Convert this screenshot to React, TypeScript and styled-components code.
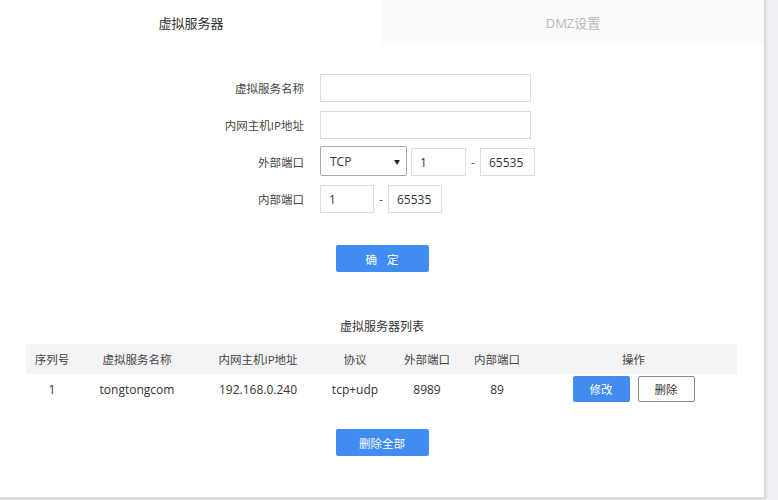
import React from 'react';
import styled, { createGlobalStyle } from 'styled-components';

const GlobalStyle = createGlobalStyle`
  html, body {
    margin: 0;
    padding: 0;
    background: #eff0f4;
    font-family: "Open Sans", "Noto Sans CJK SC", sans-serif;
    color: #333;
  }
`;

const Page = styled.div`
  width: 778px;
  height: 500px;
  overflow: hidden;
`;

const Panel = styled.div`
  width: 764px;
  height: 497px;
  background: #fff;
  border-bottom: 3px solid #dedede;
  box-shadow: 2px 0 3px rgba(0, 0, 0, 0.12);
  display: flex;
  flex-direction: column;
`;

const Tabs = styled.div`
  display: flex;
  height: 44px;
`;

const Tab = styled.div<{ active?: boolean }>`
  flex: 1;
  display: flex;
  align-items: center;
  justify-content: center;
  font-size: 13px;
  background: ${p => (p.active ? '#fff' : '#fafafa')};
  color: ${p => (p.active ? '#333' : '#b9b9b9')};
`;

const Form = styled.div`
  margin-top: 30px;
  display: grid;
  grid-template-columns: 304px auto;
  grid-auto-rows: 28px;
  column-gap: 16px;
  row-gap: 9px;
  align-items: center;
`;

const Label = styled.div`
  text-align: right;
  font-size: 11.5px;
  color: #444;
`;

const Field = styled.div`
  display: flex;
  align-items: center;
`;

const Input = styled.div<{ w: number }>`
  width: ${p => p.w}px;
  height: 28px;
  box-sizing: border-box;
  border: 1px solid #dcdcdc;
  display: flex;
  align-items: center;
  padding-left: 8px;
  font-size: 12px;
  color: #333;
`;

const Select = styled.div`
  width: 87px;
  height: 30px;
  box-sizing: border-box;
  border: 1px solid #a9a9a9;
  border-radius: 2px;
  display: flex;
  align-items: center;
  justify-content: space-between;
  padding: 0 6px 0 9px;
  margin: -2px 4px 0 0;
  font-size: 12px;
`;

const Caret = styled.span`
  font-size: 6px;
  color: #222;
`;

const Dash = styled.span`
  width: 14px;
  text-align: center;
  font-size: 12px;
  color: #555;
`;

const Center = styled.div<{ mt: number }>`
  display: flex;
  justify-content: center;
  margin-top: ${p => p.mt}px;
`;

const BlueButton = styled.button<{ spaced?: boolean }>`
  width: 93px;
  height: 27px;
  border: none;
  border-radius: 2px;
  background: #418cf0;
  color: #fff;
  font-family: inherit;
  font-size: 11.5px;
  letter-spacing: ${p => (p.spaced ? '10px' : '0')};
  text-indent: ${p => (p.spaced ? '10px' : '0')};
  padding: 0;
`;

const Title = styled.div`
  margin-top: 45px;
  text-align: center;
  font-size: 12px;
  color: #333;
`;

const Table = styled.table`
  margin: 9px 0 0 26px;
  width: 711px;
  border-collapse: collapse;
  table-layout: fixed;
  font-size: 12px;
`;

const Th = styled.th`
  height: 30px;
  padding: 0;
  background: #f4f4f6;
  font-weight: normal;
  color: #444;
  font-size: 11.5px;
`;

const Td = styled.td`
  height: 30px;
  padding: 0;
  text-align: center;
  color: #333;
`;

const Actions = styled.div`
  display: flex;
  justify-content: center;
  gap: 8px;
`;

const SmallButton = styled.button<{ primary?: boolean }>`
  width: 57px;
  height: 26px;
  box-sizing: border-box;
  border-radius: 2px;
  border: 1px solid ${p => (p.primary ? '#418cf0' : '#8a8a8a')};
  background: ${p => (p.primary ? '#418cf0' : '#fff')};
  color: ${p => (p.primary ? '#fff' : '#333')};
  font-family: inherit;
  font-size: 11.5px;
  padding: 0;
`;

const cols = [52, 118, 124, 70, 74, 66, 207];
const heads = ['序列号', '虚拟服务名称', '内网主机IP地址', '协议', '外部端口', '内部端口', '操作'];

const App = () => {
  return (
    <Page>
      <GlobalStyle />
      <Panel>
        <Tabs>
          <Tab active>虚拟服务器</Tab>
          <Tab>DMZ设置</Tab>
        </Tabs>
        <Form>
          <Label>虚拟服务名称</Label>
          <Field><Input w={211} /></Field>
          <Label>内网主机IP地址</Label>
          <Field><Input w={211} /></Field>
          <Label>外部端口</Label>
          <Field>
            <Select>TCP<Caret>▼</Caret></Select>
            <Input w={55}>1</Input>
            <Dash>-</Dash>
            <Input w={55}>65535</Input>
          </Field>
          <Label>内部端口</Label>
          <Field>
            <Input w={54}>1</Input>
            <Dash>-</Dash>
            <Input w={54}>65535</Input>
          </Field>
        </Form>
        <Center mt={32}>
          <BlueButton spaced>确定</BlueButton>
        </Center>
        <Title>虚拟服务器列表</Title>
        <Table>
          <colgroup>
            {cols.map((w, i) => <col key={i} style={{ width: w }} />)}
          </colgroup>
          <thead>
            <tr>{heads.map(h => <Th key={h}>{h}</Th>)}</tr>
          </thead>
          <tbody>
            <tr>
              <Td>1</Td>
              <Td>tongtongcom</Td>
              <Td>192.168.0.240</Td>
              <Td>tcp+udp</Td>
              <Td>8989</Td>
              <Td>89</Td>
              <Td>
                <Actions>
                  <SmallButton primary>修改</SmallButton>
                  <SmallButton>删除</SmallButton>
                </Actions>
              </Td>
            </tr>
          </tbody>
        </Table>
        <Center mt={25}>
          <BlueButton>删除全部</BlueButton>
        </Center>
      </Panel>
    </Page>
  );
};

export default App;
